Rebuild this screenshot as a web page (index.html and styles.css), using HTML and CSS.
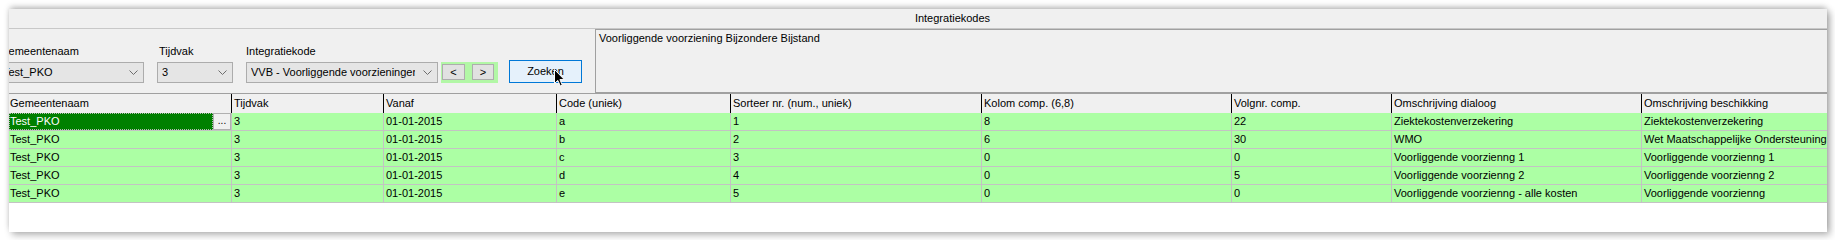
FILE: index.html
```html
<!DOCTYPE html>
<html lang="nl">

<head>
    <meta charset="UTF-8">
    <link rel="stylesheet" href="styles.css">
    <title>Integratiekodes</title>
</head>

<body>
    <div class="window">
        <div class="titlebar">Integratiekodes</div>

        <div class="toolbar">
            <div class="filters">
                <div class="field">
                    <label>Gemeentenaam</label>
                    <div class="combo combo-gem">
                        <span>Test_PKO</span>
                        <svg width="9" height="5" viewBox="0 0 9 5"><polyline points="0.5,0.5 4.5,4.5 8.5,0.5" fill="none" stroke="#6d6d6d" /></svg>
                    </div>
                </div>
                <div class="field">
                    <label>Tijdvak</label>
                    <div class="combo combo-tijd">
                        <span>3</span>
                        <svg width="9" height="5" viewBox="0 0 9 5"><polyline points="0.5,0.5 4.5,4.5 8.5,0.5" fill="none" stroke="#6d6d6d" /></svg>
                    </div>
                </div>
                <div class="field">
                    <label class="flush">Integratiekode</label>
                    <div class="combo combo-code">
                        <span>VVB - Voorliggende voorzieningen Bijzondere Bijstand</span>
                        <svg width="9" height="5" viewBox="0 0 9 5"><polyline points="0.5,0.5 4.5,4.5 8.5,0.5" fill="none" stroke="#6d6d6d" /></svg>
                    </div>
                </div>
                <div class="nav">
                    <button class="prev">&lt;</button>
                    <button class="next">&gt;</button>
                </div>
                <button class="search">Zoeken
                    <svg class="cursor" width="11" height="18" viewBox="0 0 11 18">
                        <path d="M0.5,0.5 L0.5,14.5 L3.8,11.4 L6.3,17 L8.3,16.1 L5.9,10.6 L10.3,10.6 Z" fill="#000" stroke="#fff" stroke-width="1" />
                    </svg>
                </button>
            </div>
            <div class="memo">Voorliggende voorziening Bijzondere Bijstand</div>
        </div>

        <div class="grid">
            <div class="row head">
                <div>Gemeentenaam</div>
                <div>Tijdvak</div>
                <div>Vanaf</div>
                <div>Code (uniek)</div>
                <div>Sorteer nr. (num., uniek)</div>
                <div>Kolom comp. (6,8)</div>
                <div>Volgnr. comp.</div>
                <div>Omschrijving dialoog</div>
                <div>Omschrijving beschikking</div>
            </div>
            <div class="row">
                <div class="first-sel"><span class="sel">Test_PKO</span><span class="dots">...</span></div>
                <div>3</div>
                <div>01-01-2015</div>
                <div>a</div>
                <div>1</div>
                <div>8</div>
                <div>22</div>
                <div>Ziektekostenverzekering</div>
                <div>Ziektekostenverzekering</div>
            </div>
            <div class="row">
                <div>Test_PKO</div>
                <div>3</div>
                <div>01-01-2015</div>
                <div>b</div>
                <div>2</div>
                <div>6</div>
                <div>30</div>
                <div>WMO</div>
                <div>Wet Maatschappelijke Ondersteuning</div>
            </div>
            <div class="row">
                <div>Test_PKO</div>
                <div>3</div>
                <div>01-01-2015</div>
                <div>c</div>
                <div>3</div>
                <div>0</div>
                <div>0</div>
                <div>Voorliggende voorzienng 1</div>
                <div>Voorliggende voorzienng 1</div>
            </div>
            <div class="row">
                <div>Test_PKO</div>
                <div>3</div>
                <div>01-01-2015</div>
                <div>d</div>
                <div>4</div>
                <div>0</div>
                <div>5</div>
                <div>Voorliggende voorzienng 2</div>
                <div>Voorliggende voorzienng 2</div>
            </div>
            <div class="row">
                <div>Test_PKO</div>
                <div>3</div>
                <div>01-01-2015</div>
                <div>e</div>
                <div>5</div>
                <div>0</div>
                <div>0</div>
                <div>Voorliggende voorzienng - alle kosten</div>
                <div>Voorliggende voorzienng</div>
            </div>
        </div>
    </div>
</body>

</html>
```

FILE: styles.css
```css
* {
    margin: 0;
    padding: 0;
    box-sizing: border-box;
}

body {
    width: 1835px;
    height: 240px;
    overflow: hidden;
    background: #fff;
    font-family: "Liberation Sans", Arial, sans-serif;
    font-size: 11px;
    color: #000;
}

.window {
    margin: 9px 0 0 9px;
    width: 1818px;
    height: 223px;
    background: #f0f0f0;
    overflow: hidden;
    box-shadow: 0 -3px 6px -1px rgba(0, 0, 0, 0.25), 3px 3px 7px rgba(0, 0, 0, 0.3);
}

.titlebar {
    height: 20px;
    line-height: 19px;
    padding-left: 69px;
    text-align: center;
    border-bottom: 1px solid #c8c8c8;
}

/* filter bar */

.toolbar {
    height: 65px;
    display: flex;
    border-bottom: 1px solid #a0a0a0;
}

.filters {
    display: flex;
    align-items: flex-end;
    margin-left: -11px;
    padding-bottom: 10px;
}

.field {
    display: flex;
    flex-direction: column;
    margin-right: 13px;
}

.field label {
    line-height: 13px;
    height: 13px;
    margin-bottom: 4px;
    padding-left: 2px;
}

.field label.flush {
    padding-left: 0;
}

.combo {
    height: 21px;
    display: flex;
    align-items: center;
    justify-content: space-between;
    background: #e5e5e5;
    border: 1px solid #acacac;
    padding: 0 5px 0 4px;
    line-height: 19px;
}

.combo span {
    white-space: nowrap;
    overflow: hidden;
    flex: 1;
}

.combo svg {
    flex: none;
    margin-left: 8px;
}

.combo-gem {
    width: 146px;
}

.combo-tijd {
    width: 76px;
}

.combo-code {
    width: 192px;
}

.nav {
    width: 57px;
    height: 21px;
    margin-left: -10px;
    margin-right: 11px;
    background: #b2f7a6;
    display: flex;
    padding: 2px 0 3px 1px;
}

.nav button,
.search {
    font-family: inherit;
    font-size: 11px;
    color: #000;
}

.nav button {
    height: 16px;
    background: #e1e1e1;
    border: 1px solid #adadad;
    line-height: 14px;
}

.nav .prev {
    width: 23px;
    margin-right: 7px;
}

.nav .next {
    width: 22px;
}

.search {
    position: relative;
    width: 73px;
    height: 23px;
    background: #e5f1fb;
    border: 1px solid #0078d7;
    line-height: 21px;
}

.cursor {
    position: absolute;
    left: 44px;
    top: 8px;
}

.memo {
    flex: 1;
    margin-left: 13px;
    margin-right: -20px;
    border: 1px solid #a0a0a0;
    border-right: none;
    padding: 2px 3px;
    line-height: 13px;
}

/* data grid */

.grid {
    height: 138px;
    background: #fff;
}

.row {
    display: grid;
    grid-template-columns: 222px 152px 173px 174px 251px 250px 160px 250px 250px;
    height: 18px;
    background: #acffa4;
}

.row > div {
    height: 18px;
    line-height: 17px;
    padding-left: 2px;
    border-left: 1px solid #c3c3c3;
    border-bottom: 1px solid #c3c3c3;
    white-space: nowrap;
    overflow: hidden;
}

.row > div:first-child {
    border-left: none;
    padding-left: 1px;
}

.row.head {
    height: 19px;
    background: #f0f0f0;
}

.row.head > div {
    height: 19px;
    line-height: 19px;
    border-left: 1px solid #000;
    border-bottom: none;
}

.row.head > div:first-child {
    border-left: none;
}

.row > div.first-sel {
    display: flex;
    padding-left: 0;
}

.sel {
    flex: 1;
    background: #008000;
    color: #fff;
    padding-left: 1px;
    outline: 1px dotted #b8b8b8;
    outline-offset: -1px;
}

.dots {
    width: 18px;
    height: 17px;
    background: #f0f0f0;
    border: 1px solid #b0b0b0;
    line-height: 14px;
    text-align: center;
    font-size: 10px;
}
```
